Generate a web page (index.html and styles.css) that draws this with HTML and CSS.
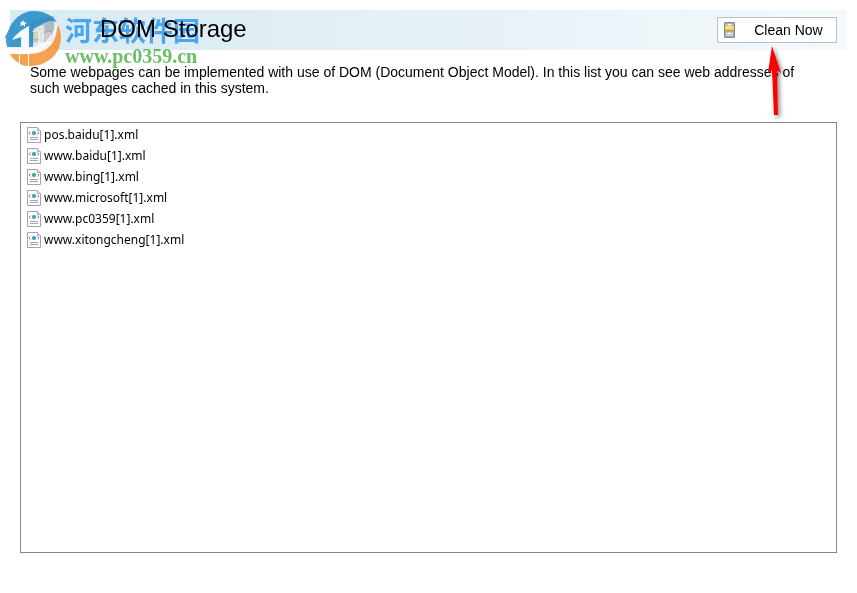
FILE: index.html
```html
<!DOCTYPE html>
<html lang="en">
<head>
<meta charset="UTF-8" />
<meta name="viewport" content="width=device-width, initial-scale=1" />
<title>DOM Storage</title>
<link rel="stylesheet" href="styles.css">
</head>
<body>
  <svg class="defs" aria-hidden="true">
    <symbol id="xmlFile" viewBox="0 0 14 16">
      <path d="M.5.5h10l3 3v12H.5z" fill="#fcfcfc" stroke="#a4a4a4"/>
      <path d="M10.500 .5v3h3" fill="#e4e4e4" stroke="#b4b4b4"/>
      <path d="M3.500 4.500 2 6 3.500 7.500M10.500 4.500 12 6 10.500 7.500" fill="none" stroke="#8b8b9c"/>
      <circle cx="7" cy="6" r="2" fill="#2c91a8"/>
      <path d="M6 5h2v2H6z" fill="#3bb39a"/>
      <path d="M3 10.500h8M3 12.500h8" stroke="#a4a4b4"/>
    </symbol>
  </svg>
  <header class="header">
    <svg class="header-icon" viewBox="0 0 26 30" aria-hidden="true">
      <path d="M1 5 15 2v24L1 28z" fill="#b9c3c8"/>
      <path d="M3 8l10-2v7L3 15zM3 17l10-2v8L3 25z" fill="#d5cfb0" stroke="#99a5aa"/>
      <path d="M15 2l9-1v23l-9 2z" fill="#a1afb5"/>
      <path d="M11 18l11-2v9l-11 2z" fill="#c4c8c6" stroke="#8d999e"/>
    </svg>
    <h1>DOM Storage</h1>
    <button type="button" class="clean-button">
      <svg viewBox="0 0 11 16" aria-hidden="true">
        <path d="M.5.5h10v15H.5z" fill="#a8adb2" stroke="#858b92"/>
        <path d="M2 2h7v2H2zM2 10h7v4H2z" fill="#c9cdd0"/>
        <path d="M1 4h9v4H1z" fill="#f0d661"/>
        <path d="M2 5h6v1H2z" fill="#fff2ac"/>
        <path d="M1 8h9v1H1z" fill="#c79c36"/>
        <path d="M4 2h3v1H4zM4 11h3v1H4z" fill="#fff"/>
      </svg>
      <span>Clean Now</span>
    </button>
  </header>
  <main>
    <p class="description">Some webpages can be implemented with use of DOM (Document Object Model). In this list you can see web addresses of such webpages cached in this system.</p>
    <ul class="file-list">
      <li><svg aria-hidden="true"><use href="#xmlFile"/></svg>pos.baidu[1].xml</li>
      <li><svg aria-hidden="true"><use href="#xmlFile"/></svg>www.baidu[1].xml</li>
      <li><svg aria-hidden="true"><use href="#xmlFile"/></svg>www.bing[1].xml</li>
      <li><svg aria-hidden="true"><use href="#xmlFile"/></svg>www.microsoft[1].xml</li>
      <li><svg aria-hidden="true"><use href="#xmlFile"/></svg>www.pc0359[1].xml</li>
      <li><svg aria-hidden="true"><use href="#xmlFile"/></svg>www.xitongcheng[1].xml</li>
    </ul>
  </main>

  <!-- site stamp and pointer lie over the page -->
  <div class="watermark">
    <svg viewBox="0 0 58 56" aria-hidden="true">
      <!-- blue upper shell -->
      <path d="M3 38C0 33 1 27 3 22 7 9 17 1 29 1c10 0 18 4 23 11-6-2-11-1-16 3L28 19v19z" fill="#1585c5"/>
      <path d="M0 27 5 18 3 33z" fill="#1585c5"/>
      <!-- orange lower shell -->
      <path d="M53 15c7 14 1 31-12 37-5 3-11 4-17 4V43c15-2 26-13 29-28z" fill="#f28c28"/>
      <path d="M5 44h9v9c-4-2-7-5-9-9zM15 44h8v12c-3 0-6-1-8-2z" fill="#f28c28"/>
      <!-- the two white ones with the band between the shells -->
      <path d="M7 30c3-5 9-10 17-14v22h-8V27z" fill="#fff"/>
      <path d="M27 22c4-4 8-6 12-7v20l-6 3V22z" fill="#fff" fill-opacity=".7"/>
      <path d="M3 37h21c13 0 22-8 28-24 1 20-10 31-28 31H5z" fill="#fff" fill-opacity=".9"/>
      <path d="M18 10l1 2 3 1-2 1v3l-2-2-3 1 1-2-1-2h2z" fill="#fff"/>
    </svg>
    <div class="watermark-text">
      <span class="watermark-name" lang="zh-CN">河东软件园</span>
      <span class="watermark-url">www.pc0359.cn</span>
    </div>
  </div>
  <svg class="arrow" viewBox="0 0 24 76" aria-hidden="true">
    <path d="M8 2 17 29 13 26 14 71 10 71 8 26 4 29z" fill="#f00"/>
  </svg>
</body>
</html>
```
FILE: styles.css
```css
* {
  box-sizing: border-box;
}
html {
  height: 100%;
}
body {
  display: flex;
  flex-direction: column;
  position: relative;
  min-height: 100%;
  margin: 0;
  padding: 10px 10px 40px;
  background: #fff;
  color: #000;
  font-family: "Liberation Sans", Arial, sans-serif;
  font-size: 14px;
  line-height: 16px;
}
.defs {
  position: absolute;
  width: 0;
  height: 0;
}
.header {
  display: flex;
  align-items: center;
  height: 40px;
  padding: 0 10px;
  background: linear-gradient(to right, #d9eaf2, #e0eef4 30%, #eaf2fa 64%, #ebf4f8 70%, #f4f9fc);
}
.header-icon {
  width: 26px;
  height: 30px;
  margin: 0 44px 0 10px;
  opacity: 0.8;
}
h1 {
  flex: 1;
  margin: 0;
  font-size: 24px;
  font-weight: 400;
  line-height: 36px;
  padding-bottom: 2px;
}
.clean-button {
  display: flex;
  align-items: center;
  width: 120px;
  height: 26px;
  padding: 0 6px;
  border: 1px solid #b4c3cb;
  background: #fff;
  color: #000;
  font: inherit;
}
.clean-button svg {
  width: 11px;
  height: 16px;
}
.clean-button span {
  flex: 1;
  padding-left: 12px;
}
main {
  display: flex;
  flex: 1;
  flex-direction: column;
  padding: 14px 10px 0;
}
.description {
  margin: 0 10px 26px;
}
.file-list {
  flex: 1;
  margin: 0;
  padding: 1px 6px;
  border: 1px solid #828790;
  list-style: none;
  font-family: "Noto Sans", sans-serif;
  font-size: 12px;
}
.file-list li {
  display: flex;
  align-items: center;
  gap: 3px;
  height: 21px;
}
.file-list svg {
  width: 14px;
  height: 16px;
}
.watermark {
  display: flex;
  gap: 2px;
  position: absolute;
  top: 10px;
  left: 5px;
  pointer-events: none;
}
.watermark svg {
  width: 58px;
  height: 56px;
  opacity: 0.8;
}
.watermark-text {
  display: flex;
  flex-direction: column;
  padding-top: 4px;
  mix-blend-mode: multiply;
}
.watermark-name {
  color: #55b4f8;
  font-family: "Noto Sans CJK SC", sans-serif;
  font-size: 27px;
  font-weight: 700;
  line-height: 32px;
}
.watermark-url {
  color: #6fbd68;
  font-family: "Liberation Serif", serif;
  font-size: 20px;
  font-weight: 700;
  line-height: 20px;
}
.arrow {
  position: absolute;
  top: 44px;
  right: 69px;
  width: 24px;
  height: 76px;
  filter: drop-shadow(2px 2px 2px rgba(0, 0, 0, 0.5));
  pointer-events: none;
}
```
